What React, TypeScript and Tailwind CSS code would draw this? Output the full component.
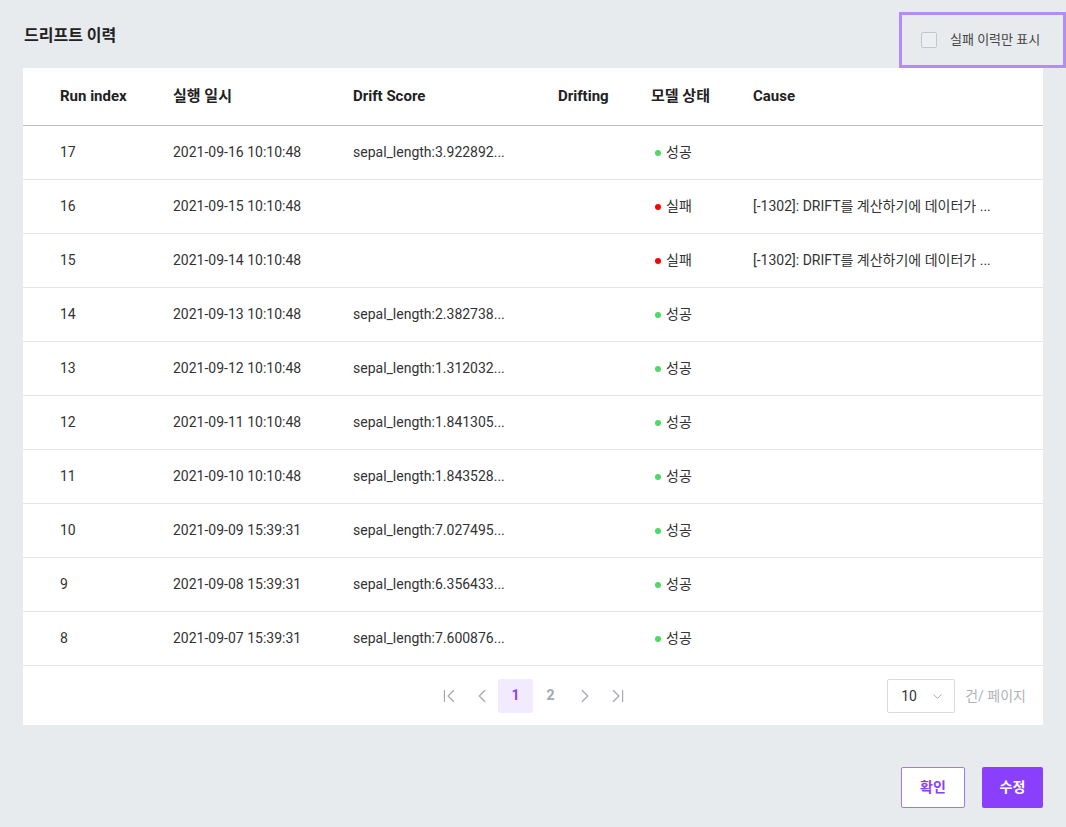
import React from "react";
import { ChevronFirst, ChevronLast, ChevronLeft, ChevronRight, ChevronDown } from "lucide-react";

type Row = { idx: string; date: string; score: string; ok: boolean; cause: string };

const rows: Row[] = [
  { idx: "17", date: "2021-09-16 10:10:48", score: "sepal_length:3.922892...", ok: true, cause: "" },
  { idx: "16", date: "2021-09-15 10:10:48", score: "", ok: false, cause: "[-1302]: DRIFT를 계산하기에 데이터가 ..." },
  { idx: "15", date: "2021-09-14 10:10:48", score: "", ok: false, cause: "[-1302]: DRIFT를 계산하기에 데이터가 ..." },
  { idx: "14", date: "2021-09-13 10:10:48", score: "sepal_length:2.382738...", ok: true, cause: "" },
  { idx: "13", date: "2021-09-12 10:10:48", score: "sepal_length:1.312032...", ok: true, cause: "" },
  { idx: "12", date: "2021-09-11 10:10:48", score: "sepal_length:1.841305...", ok: true, cause: "" },
  { idx: "11", date: "2021-09-10 10:10:48", score: "sepal_length:1.843528...", ok: true, cause: "" },
  { idx: "10", date: "2021-09-09 15:39:31", score: "sepal_length:7.027495...", ok: true, cause: "" },
  { idx: "9", date: "2021-09-08 15:39:31", score: "sepal_length:6.356433...", ok: true, cause: "" },
  { idx: "8", date: "2021-09-07 15:39:31", score: "sepal_length:7.600876...", ok: true, cause: "" },
];

const font = { fontFamily: "Roboto, 'Noto Sans CJK KR', sans-serif" };

export default function App() {
  return (
    <div className="w-[1066px] h-[827px] bg-[#e8ebee] flex flex-col" style={font}>
      <div className="h-[68px] flex items-start justify-between pl-[24px]">
        <div className="mt-[25px] text-[16px] font-bold text-[#222] leading-[22px]">드리프트 이력</div>
        <div className="mt-[12px] h-[56px] w-[167px] border-[3px] border-[#b48cf7] flex items-center pl-[19px] gap-[13px]">
          <div className="w-[16px] h-[16px] border border-[#c4c6cc] rounded-[2px] bg-[#eceef1]" />
          <span className="text-[13px] text-[#444]">실패 이력만 표시</span>
        </div>
      </div>

      <div className="ml-[23px] w-[1020px] bg-white flex flex-col">
        <div className="h-[58px] flex items-center border-b border-[#b9bdc4] text-[15px] font-bold text-[#222]">
          <div className="w-[150px] pl-[37px]">Run index</div>
          <div className="w-[180px]">실행 일시</div>
          <div className="w-[205px]">Drift Score</div>
          <div className="w-[93px]">Drifting</div>
          <div className="w-[102px]">모델 상태</div>
          <div className="flex-1">Cause</div>
        </div>
        {rows.map((r) => (
          <div key={r.idx} className="h-[54px] flex items-center border-b border-[#e3e4e6] text-[14px] text-[#333]">
            <div className="w-[150px] pl-[37px]">{r.idx}</div>
            <div className="w-[180px]">{r.date}</div>
            <div className="w-[205px]">{r.score}</div>
            <div className="w-[93px]"></div>
            <div className="w-[102px] flex items-center pl-[4px] gap-[5px]">
              <span className={r.ok ? "w-[6px] h-[6px] rounded-full bg-[#4cd964]" : "w-[6px] h-[6px] rounded-full bg-[#ff0000]"} />
              <span>{r.ok ? "성공" : "실패"}</span>
            </div>
            <div className="flex-1">{r.cause}</div>
          </div>
        ))}
        <div className="h-[59px] relative flex items-center justify-center">
          <div className="flex items-center text-[#a3a7b0]">
            <div className="w-[33px] flex justify-center"><ChevronFirst size={22} strokeWidth={1.3} /></div>
            <div className="w-[33px] flex justify-center"><ChevronLeft size={22} strokeWidth={1.3} /></div>
            <div className="w-[35px] h-[34px] rounded-[3px] bg-[#f2eaff] text-[#8a3ffc] font-bold text-[14px] flex items-center justify-center">1</div>
            <div className="w-[35px] h-[34px] text-[#a3a7b0] font-bold text-[14px] flex items-center justify-center">2</div>
            <div className="w-[33px] flex justify-center"><ChevronRight size={22} strokeWidth={1.3} /></div>
            <div className="w-[33px] flex justify-center"><ChevronLast size={22} strokeWidth={1.3} /></div>
          </div>
          <div className="absolute right-[17px] top-[13px] flex items-center gap-[10px]">
            <div className="w-[68px] h-[34px] border border-[#d9dbdf] rounded-[2px] flex items-center justify-between pl-[13px] pr-[9px] text-[14px] text-[#333]">
              <span>10</span>
              <ChevronDown size={15} strokeWidth={1.4} className="text-[#9a9ea6]" />
            </div>
            <span className="text-[14px] text-[#b0b3b9]">건/ 페이지</span>
          </div>
        </div>
      </div>

      <div className="flex justify-end gap-[17px] pr-[23px] mt-[42px]">
        <button className="w-[64px] h-[41px] border border-[#a874fb] bg-white text-[#8a3ffc] text-[14px] font-bold rounded-[2px]">확인</button>
        <button className="w-[61px] h-[41px] bg-[#8a3ffc] text-white text-[14px] font-bold rounded-[2px]">수정</button>
      </div>
    </div>
  );
}
